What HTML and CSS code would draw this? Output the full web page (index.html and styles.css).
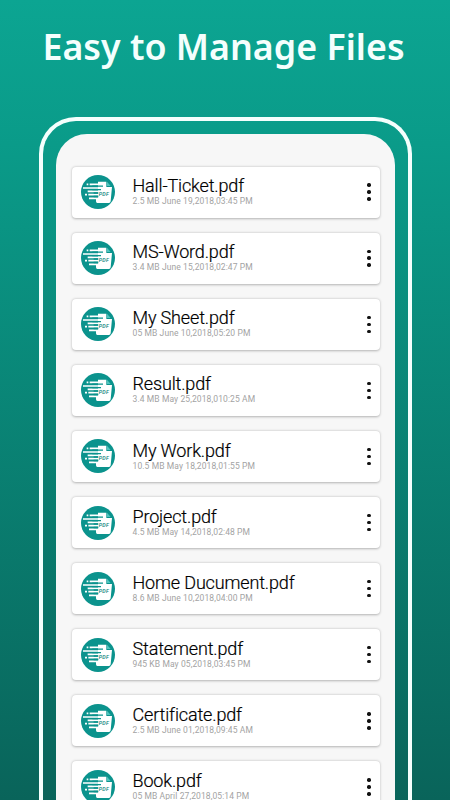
FILE: index.html
```html
<!DOCTYPE html>
<html lang="en">
<head>
  <meta charset="UTF-8" />
  <meta name="viewport" content="width=device-width, initial-scale=1.0"/>
  <title>Easy to Manage Files</title>
  <link rel="stylesheet" href="styles.css">
</head>
<body>
  <h1>Easy to Manage Files</h1>
  <div class="phone">
    <div class="screen" id="fileList"></div>
  </div>

  <script>
    const files = [
      { name: "Hall-Ticket.pdf", info: "2.5 MB June 19,2018,03:45 PM" },
      { name: "MS-Word.pdf", info: "3.4 MB June 15,2018,02:47 PM" },
      { name: "My Sheet.pdf", info: "05 MB June 10,2018,05:20 PM" },
      { name: "Result.pdf", info: "3.4 MB May 25,2018,010:25 AM" },
      { name: "My Work.pdf", info: "10.5 MB May 18,2018,01:55 PM" },
      { name: "Project.pdf", info: "4.5 MB May 14,2018,02:48 PM" },
      { name: "Home Ducument.pdf", info: "8.6 MB June 10,2018,04:00 PM" },
      { name: "Statement.pdf", info: "945 KB May 05,2018,03:45 PM" },
      { name: "Certificate.pdf", info: "2.5 MB June 01,2018,09:45 AM" },
      { name: "Book.pdf", info: "05 MB April 27,2018,05:14 PM" }
    ];

    const pdfIcon = `<svg class="icon" viewBox="0 0 102 102">
      <circle cx="51" cy="51" r="51" fill="#0b938d"/>
      <path d="M53 20h23v16h17l-4 43q-1 5-5 5H49q-4 0-4-5v-9h6V20z" fill="#fff"/>
      <path d="M78 20l11 13H78z" fill="#4fc4be"/>
      <path d="M17 28h5M26 28h28M6 39h50M20 49h34M12 59h6M22 59h32M24 70h28" stroke="#fff" stroke-width="5"/>
      <path d="M34 33.5h32M34 44h26M38 54h14M38 64.5h14" stroke="#0b938d" stroke-width="4"/>
      <text x="53" y="64" class="icon-text">PDF</text>
    </svg>`;

    document.getElementById("fileList").innerHTML = files.map(f => `
      <div class="card">
        ${pdfIcon}
        <div class="details">
          <div class="name">${f.name}</div>
          <div class="info">${f.info}</div>
        </div>
        <div class="menu"><span></span><span></span><span></span></div>
      </div>`).join("");
  </script>
</body>
</html>
```
FILE: styles.css
```css
* {
  box-sizing: border-box;
}
body {
  margin: 0;
  height: 800px;
  overflow: hidden;
  font-family: Roboto, sans-serif;
  background: linear-gradient(#0ca592 0%, #0a9b89 18%, #09645a 100%);
}
h1 {
  margin: 0;
  height: 117px;
  padding: 20px 3px 0 0;
  font-family: "Noto Sans", sans-serif;
  font-size: 35.8px;
  font-weight: 600;
  line-height: 52px;
  text-align: center;
  white-space: nowrap;
  color: #f4fffd;
}
.phone {
  width: 373px;
  height: 683px;
  margin-left: 39px;
  padding: 13px 13px 0;
  border: 4px solid #f4fffd;
  border-bottom: none;
  border-radius: 37px 37px 0 0;
}
.screen {
  height: 666px;
  padding: 32.6px 15.5px 0;
  overflow: hidden;
  background: #f7f7f7;
  border-radius: 31px 31px 0 0;
}
.card {
  display: flex;
  align-items: center;
  height: 51px;
  margin-bottom: 15.1px;
  padding: 0 9px 0 9.5px;
  background: #fff;
  border-radius: 4px;
  box-shadow: 0 0.5px 2.5px rgba(0, 0, 0, 0.28);
}
.icon {
  width: 34px;
  height: 34px;
}
.icon-text {
  font: italic 500 16px Roboto, sans-serif;
  letter-spacing: 1px;
  fill: #0b7f7a;
}
.details {
  flex: 1;
  margin-left: 17.5px;
  padding-bottom: 2.8px;
  white-space: nowrap;
}
.name {
  font-size: 18px;
  font-weight: 300;
  line-height: 21px;
  letter-spacing: -0.15px;
  color: #000;
  -webkit-text-stroke: 0.2px #000;
}
.info {
  font-size: 8.5px;
  line-height: 10px;
  letter-spacing: 0.1px;
  color: #a3a3a3;
}
.menu {
  display: flex;
  flex-direction: column;
  gap: 3.6px;
}
.menu span {
  width: 3.4px;
  height: 3.4px;
  border-radius: 50%;
  background: #111;
}
```
